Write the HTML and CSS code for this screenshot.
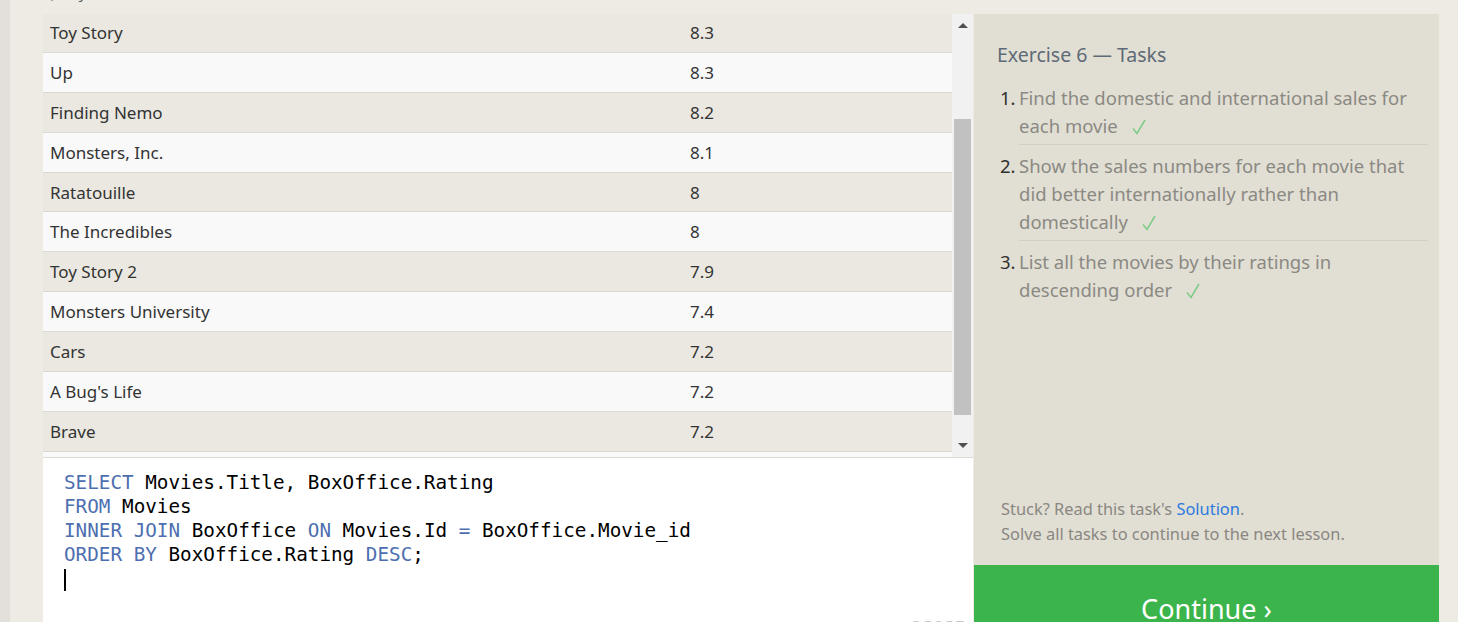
FILE: index.html
```html
<!DOCTYPE html>
<html lang="en">
<head>
<meta charset="utf-8">
<title>SQL Lesson — Exercise 6</title>
<link rel="stylesheet" href="styles.css">
</head>
<body>
<div class="page">
  <div class="edge"></div>
  <main class="lesson">
    <div class="caption">Query Results</div>
    <div class="workspace">
      <section class="left">
        <div class="results">
          <div class="viewport">
            <table class="grid">
              <tbody>
                <tr><td class="c1">Toy Story</td><td>8.3</td></tr>
                <tr><td class="c1">Up</td><td>8.3</td></tr>
                <tr><td class="c1">Finding Nemo</td><td>8.2</td></tr>
                <tr><td class="c1">Monsters, Inc.</td><td>8.1</td></tr>
                <tr><td class="c1">Ratatouille</td><td>8</td></tr>
                <tr><td class="c1">The Incredibles</td><td>8</td></tr>
                <tr><td class="c1">Toy Story 2</td><td>7.9</td></tr>
                <tr><td class="c1">Monsters University</td><td>7.4</td></tr>
                <tr><td class="c1">Cars</td><td>7.2</td></tr>
                <tr><td class="c1">A Bug's Life</td><td>7.2</td></tr>
                <tr><td class="c1">Brave</td><td>7.2</td></tr>
                <tr><td class="c1"></td><td></td></tr>
              </tbody>
            </table>
          </div>
          <div class="scrollbar">
            <div class="arrow up"></div>
            <div class="track"><div class="thumb"></div></div>
            <div class="arrow down"></div>
          </div>
        </div>
        <div class="editor">
          <pre class="code"><span class="kw">SELECT</span> Movies.Title, BoxOffice.Rating
<span class="kw">FROM</span> Movies
<span class="kw">INNER JOIN</span> BoxOffice <span class="kw">ON</span> Movies.Id <span class="kw">=</span> BoxOffice.Movie_id
<span class="kw">ORDER BY</span> BoxOffice.Rating <span class="kw">DESC</span>;
<span class="cursor"></span></pre>
          <span class="reset">RESET</span>
        </div>
      </section>
      <aside class="tasks">
        <h2 class="tasks-title">Exercise 6 — Tasks</h2>
        <ol class="task-list">
          <li><span class="num">1.</span><span class="txt">Find the domestic and international sales for each movie<svg class="check" width="14" height="16" viewBox="0 0 14 16"><path d="M1 9.5 L5 14.5 L13 1" fill="none" stroke="#7ccb84" stroke-width="1.5"/></svg></span></li>
          <li><span class="num">2.</span><span class="txt">Show the sales numbers for each movie that did better internationally rather than domestically<svg class="check" width="14" height="16" viewBox="0 0 14 16"><path d="M1 9.5 L5 14.5 L13 1" fill="none" stroke="#7ccb84" stroke-width="1.5"/></svg></span></li>
          <li><span class="num">3.</span><span class="txt">List all the movies by their ratings in descending order<svg class="check" width="14" height="16" viewBox="0 0 14 16"><path d="M1 9.5 L5 14.5 L13 1" fill="none" stroke="#7ccb84" stroke-width="1.5"/></svg></span></li>
        </ol>
        <div class="help">
          <p>Stuck? Read this task's <a href="#">Solution</a>.</p>
          <p>Solve all tasks to continue to the next lesson.</p>
        </div>
        <div class="continue">Continue ›</div>
      </aside>
    </div>
  </main>
</div>
</body>
</html>
```
FILE: styles.css
```css
html, body {
  margin: 0;
  padding: 0;
  height: 622px;
  overflow: hidden;
  background: #eeebe4;
  font-family: "Noto Sans", "Open Sans", sans-serif;
}

.page {
  display: flex;
  height: 622px;
}

.edge {
  width: 10px;
  flex: none;
  background: #e3dfda;
}

.lesson {
  flex: none;
  margin-left: 33px;
  margin-top: -17px;
  width: 1396px;
}

.caption {
  height: 18px;
  line-height: 18px;
  font-size: 15px;
  color: #555;
}

.workspace {
  margin-top: 13px;
  display: flex;
  align-items: stretch;
}

.left {
  width: 930px;
  flex: none;
  display: flex;
  flex-direction: column;
}

.results {
  display: flex;
  height: 444px;
  border-bottom: 1px solid #dcdad3;
  box-sizing: border-box;
  background: #f9f9f9;
}

.viewport {
  flex: 1;
  overflow: hidden;
}

.grid {
  width: 100%;
  margin-top: -2px;
  border-collapse: collapse;
  font-size: 17px;
  color: #333333;
}

.grid tr {
  height: 39.9px;
}

.grid tr:nth-child(odd) {
  background: #eae8e0;
}

.grid tr:nth-child(even) {
  background: #f9f9f9;
}

.grid td {
  padding: 0 0 0 7px;
  border-top: 1px solid #dcdad3;
  vertical-align: middle;
}

.grid td.c1 {
  width: 633px;
}

.scrollbar {
  width: 21px;
  flex: none;
  background: #f1f1f1;
  display: flex;
  flex-direction: column;
}

.arrow {
  height: 23px;
  flex: none;
  display: flex;
  align-items: center;
  justify-content: center;
}

.arrow::before {
  content: "";
  width: 0;
  height: 0;
  border-left: 5px solid transparent;
  border-right: 5px solid transparent;
}

.arrow.up::before {
  border-bottom: 5px solid #505050;
}

.arrow.down::before {
  border-top: 5px solid #505050;
}

.track {
  flex: 1;
  padding: 82px 2px 0 2px;
}

.thumb {
  height: 296px;
  background: #c1c1c1;
}

.editor {
  position: relative;
  background: #ffffff;
  height: 200px;
  padding: 13px 0 0 21px;
  box-sizing: border-box;
}

.code {
  margin: 0;
  font-family: "DejaVu Sans Mono", "Liberation Mono", monospace;
  font-size: 19.3px;
  line-height: 24px;
  color: #000;
}

.code .kw {
  color: #4d6fb0;
}

.cursor {
  display: inline-block;
  width: 2px;
  height: 22px;
  background: #000;
  vertical-align: middle;
}

.reset {
  position: absolute;
  left: 869px;
  top: 158px;
  font-size: 14px;
  letter-spacing: 3px;
  color: #c8c8c8;
}

.tasks {
  width: 465px;
  flex: none;
  margin-left: 1px;
  background: #e1dfd4;
  display: flex;
  flex-direction: column;
  height: 646px;
  box-sizing: border-box;
  padding: 0;
}

.tasks-title {
  margin: 28px 0 0 23px;
  font-size: 19.5px;
  font-weight: normal;
  color: #5e6a76;
  line-height: 26px;
}

.task-list {
  list-style: none;
  margin: 14px 11px 0 26px;
  padding: 0;
}

.task-list li {
  display: flex;
  font-size: 18.5px;
  line-height: 28px;
  padding: 2px 0 4px 0;
}

.task-list li + li {
  border-top: 1px solid transparent;
}

.task-list .num {
  width: 19px;
  flex: none;
  color: #2f2f2f;
}

.task-list .txt {
  color: #8b8983;
  padding-bottom: 4px;
  border-bottom: 1px solid #d2d0c6;
  flex: 1;
}

.task-list li:last-child .txt {
  border-bottom: none;
}

.check {
  margin-left: 14px;
  vertical-align: -2px;
}

.help {
  margin-top: auto;
  padding: 0 0 19px 27px;
  font-size: 16.4px;
  line-height: 25px;
  color: #8a8782;
}

.help p {
  margin: 0;
}

.help a {
  color: #2b79e0;
  text-decoration: none;
}

.continue {
  background: #3bb54b;
  color: #fff;
  height: 95px;
  flex: none;
  text-align: center;
  font-size: 27px;
  line-height: 28px;
  padding-top: 30px;
  box-sizing: border-box;
}
```
